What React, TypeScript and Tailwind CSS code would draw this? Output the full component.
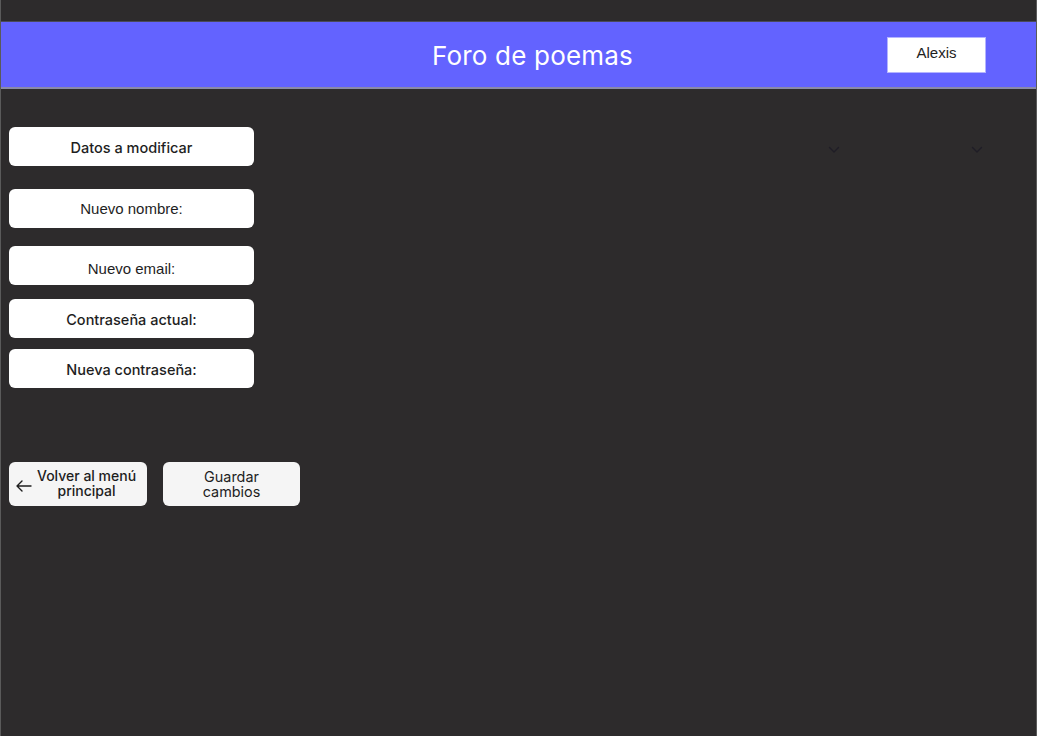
import React from 'react';

const fieldBtn =
  "w-[245px] h-[39px] rounded-[6px] bg-white flex items-center justify-center text-[#1e1e1e]";
const interLabel = " text-[14.5px] font-medium pt-[2px]";
const arialLabel = " text-[15px] font-['Liberation_Sans',Arial,sans-serif]";

const Chevron = () => (
  <svg width="12" height="8" viewBox="0 0 12 8" fill="none">
    <path d="M1.5 1.5L6 6L10.5 1.5" stroke="#1f1d26" strokeWidth="1.4" strokeLinecap="round" strokeLinejoin="round" />
  </svg>
);

export default function App() {
  return (
    <div className="w-[1037px] h-[736px] bg-[#2d2b2c] border-x border-[#5a5a5a] font-['Inter',sans-serif] overflow-hidden">
      <header className="mt-[21px] h-[68px] bg-[#6363ff] border-t border-[#4a4a5a] border-b-2 border-b-[#8a8aa8] relative flex items-center justify-center">
        <h1 className="text-white text-[26px] font-normal tracking-[0.2px] mt-[2px] ml-[28px]">Foro de poemas</h1>
        <div className="absolute right-[50px] top-[15px] w-[99px] h-[36px] bg-white border border-[#b4b4ff] flex items-center justify-center font-['Liberation_Sans',Arial,sans-serif] text-[15px] text-[#1e1e1e] pb-[3px]">
          Alexis
        </div>
      </header>

      <main className="pl-[8px] pt-[38px]">
        <div className="flex items-center">
          <button className={fieldBtn + interLabel}>Datos a modificar</button>
          <div className="flex items-center gap-[131px] ml-[574px] mt-[6px]">
            <Chevron />
            <Chevron />
          </div>
        </div>

        <div className="mt-[23px] flex flex-col">
          <div className={fieldBtn + arialLabel + " pt-[2px]"}>Nuevo nombre:</div>
          <div className={fieldBtn + arialLabel + " mt-[18px] pt-[8px]"}>Nuevo email:</div>
          <div className={fieldBtn + interLabel + " mt-[14px]"}>Contraseña actual:</div>
          <div className={fieldBtn + interLabel + " mt-[11px]"}>Nueva contraseña:</div>
        </div>

        <div className="mt-[74px] flex gap-[16px]">
          <button className="w-[138px] h-[44px] rounded-[6px] bg-[#f5f5f5] flex items-center text-[14px] font-medium text-[#1e1e1e] leading-[15px]">
            <svg width="18" height="14" viewBox="0 0 18 14" fill="none" className="ml-[6px] mt-[3px] shrink-0">
              <path d="M16 7H2M7 2L2 7L7 12" stroke="#1e1e1e" strokeWidth="1.4" strokeLinecap="round" strokeLinejoin="round" />
            </svg>
            <span className="text-center ml-[4px] -mt-[2px]">Volver al menú<br />principal</span>
          </button>
          <button className="w-[137px] h-[44px] rounded-[6px] bg-[#f5f5f5] flex items-center justify-center text-[14.4px] text-[#1e1e1e] leading-[15px] text-center">
            Guardar<br />cambios
          </button>
        </div>
      </main>
    </div>
  );
}
